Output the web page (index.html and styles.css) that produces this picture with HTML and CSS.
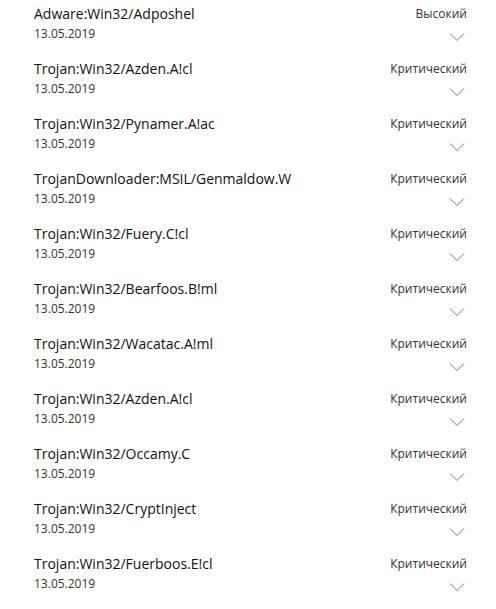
FILE: index.html
```html
<!DOCTYPE html>
<html lang="ru">

<head>
    <meta charset="UTF-8">
    <meta name="viewport" content="width=device-width, initial-scale=1.0">
    <title>Журнал защиты</title>
    <link rel="stylesheet" href="styles.css">
</head>

<body>
    <ul class="threat-list">
        <li class="threat-item">
            <div class="threat-item__name">Adware:Win32/Adposhel</div>
            <div class="threat-item__level">Высокий</div>
            <div class="threat-item__date">13.05.2019</div>
            <svg class="threat-item__chevron" viewBox="0 0 16 8" width="16" height="8"><path d="M1 0.5l7 7 7-7" /></svg>
        </li>
        <li class="threat-item">
            <div class="threat-item__name">Trojan:Win32/Azden.A!cl</div>
            <div class="threat-item__level">Критический</div>
            <div class="threat-item__date">13.05.2019</div>
            <svg class="threat-item__chevron" viewBox="0 0 16 8" width="16" height="8"><path d="M1 0.5l7 7 7-7" /></svg>
        </li>
        <li class="threat-item">
            <div class="threat-item__name">Trojan:Win32/Pynamer.A!ac</div>
            <div class="threat-item__level">Критический</div>
            <div class="threat-item__date">13.05.2019</div>
            <svg class="threat-item__chevron" viewBox="0 0 16 8" width="16" height="8"><path d="M1 0.5l7 7 7-7" /></svg>
        </li>
        <li class="threat-item">
            <div class="threat-item__name">TrojanDownloader:MSIL/Genmaldow.W</div>
            <div class="threat-item__level">Критический</div>
            <div class="threat-item__date">13.05.2019</div>
            <svg class="threat-item__chevron" viewBox="0 0 16 8" width="16" height="8"><path d="M1 0.5l7 7 7-7" /></svg>
        </li>
        <li class="threat-item">
            <div class="threat-item__name">Trojan:Win32/Fuery.C!cl</div>
            <div class="threat-item__level">Критический</div>
            <div class="threat-item__date">13.05.2019</div>
            <svg class="threat-item__chevron" viewBox="0 0 16 8" width="16" height="8"><path d="M1 0.5l7 7 7-7" /></svg>
        </li>
        <li class="threat-item">
            <div class="threat-item__name">Trojan:Win32/Bearfoos.B!ml</div>
            <div class="threat-item__level">Критический</div>
            <div class="threat-item__date">13.05.2019</div>
            <svg class="threat-item__chevron" viewBox="0 0 16 8" width="16" height="8"><path d="M1 0.5l7 7 7-7" /></svg>
        </li>
        <li class="threat-item">
            <div class="threat-item__name">Trojan:Win32/Wacatac.A!ml</div>
            <div class="threat-item__level">Критический</div>
            <div class="threat-item__date">13.05.2019</div>
            <svg class="threat-item__chevron" viewBox="0 0 16 8" width="16" height="8"><path d="M1 0.5l7 7 7-7" /></svg>
        </li>
        <li class="threat-item">
            <div class="threat-item__name">Trojan:Win32/Azden.A!cl</div>
            <div class="threat-item__level">Критический</div>
            <div class="threat-item__date">13.05.2019</div>
            <svg class="threat-item__chevron" viewBox="0 0 16 8" width="16" height="8"><path d="M1 0.5l7 7 7-7" /></svg>
        </li>
        <li class="threat-item">
            <div class="threat-item__name">Trojan:Win32/Occamy.C</div>
            <div class="threat-item__level">Критический</div>
            <div class="threat-item__date">13.05.2019</div>
            <svg class="threat-item__chevron" viewBox="0 0 16 8" width="16" height="8"><path d="M1 0.5l7 7 7-7" /></svg>
        </li>
        <li class="threat-item">
            <div class="threat-item__name">Trojan:Win32/CryptInject</div>
            <div class="threat-item__level">Критический</div>
            <div class="threat-item__date">13.05.2019</div>
            <svg class="threat-item__chevron" viewBox="0 0 16 8" width="16" height="8"><path d="M1 0.5l7 7 7-7" /></svg>
        </li>
        <li class="threat-item">
            <div class="threat-item__name">Trojan:Win32/Fuerboos.E!cl</div>
            <div class="threat-item__level">Критический</div>
            <div class="threat-item__date">13.05.2019</div>
            <svg class="threat-item__chevron" viewBox="0 0 16 8" width="16" height="8"><path d="M1 0.5l7 7 7-7" /></svg>
        </li>
    </ul>
</body>

</html>
```

FILE: styles.css
```css
:root {
    --background-color: #fff;
    --title-color: #111;
    --text-color: #333;
    --chevron-color: #7a7a7a;
}

body {
    font-family: 'Open Sans', 'Noto Sans', sans-serif;
    margin: 0;
    padding: 0;
    background-color: var(--background-color);
    color: var(--text-color);
}

.threat-list {
    list-style: none;
    margin: 0;
    padding: 0 29px 0 34px;
}

.threat-item {
    display: grid;
    grid-template-columns: 1fr auto;
    align-items: start;
    align-content: start;
    height: 55px;
    padding-top: 4px;
    box-sizing: border-box;
}

.threat-item__name {
    font-size: 14px;
    line-height: 20px;
    color: var(--title-color);
}

.threat-item__level {
    font-size: 12px;
    line-height: 20px;
    text-align: right;
}

.threat-item__date {
    margin-top: 2px;
    font-size: 12px;
    line-height: 16px;
}

.threat-item__chevron {
    justify-self: end;
    margin: 9px 2px 0 0;
    fill: none;
    stroke: var(--chevron-color);
    stroke-width: 1;
}
```
